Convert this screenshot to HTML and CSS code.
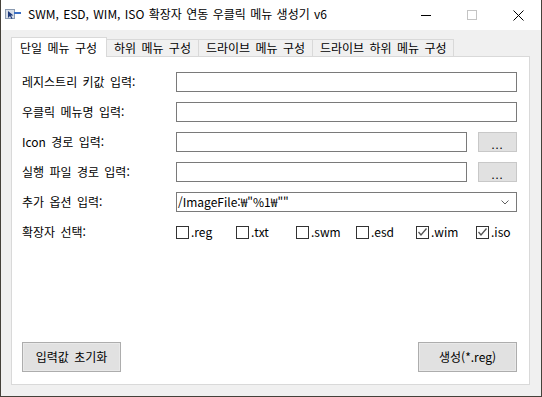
FILE: index.html
```html
<!DOCTYPE html>
<html lang="ko">
	<head>
		<meta charset="utf-8">
		<title>SWM, ESD, WIM, ISO 확장자 연동 우클릭 메뉴 생성기 v6</title>
		<link rel="stylesheet" href="styles.css">
	</head>
	<body>

		<div id="window">

			<div class="titleBar">
				<svg class="appIcon" width="16" height="12" viewBox="0 0 16 12">
					<rect x="0.5" y="1.5" width="9" height="9" fill="#d6dde8" stroke="#8a9ab0"/>
					<path d="M3 3 L3 10 L5 8 L6.5 11 L7.5 10.5 L6 7.5 L8.5 7.5 Z" fill="#1f3a7a"/>
					<rect x="9" y="4" width="7" height="2" fill="#3b6fc4"/>
				</svg>
				<div class="caption">SWM, ESD, WIM, ISO 확장자 연동 우클릭 메뉴 생성기 v6</div>
				<div class="capBt"><span class="minLine"></span></div>
				<div class="capBt"><span class="maxBox"></span></div>
				<div class="capBt">
					<svg width="11" height="11" viewBox="0 0 11 11">
						<path d="M0.5 0.5 L10.5 10.5 M10.5 0.5 L0.5 10.5" stroke="#000" stroke-width="1"/>
					</svg>
				</div>
			</div>

			<div class="client">

				<div class="tabs">
					<div class="tab selected">단일 메뉴 구성</div>
					<div class="tab">하위 메뉴 구성</div>
					<div class="tab">드라이브 메뉴 구성</div>
					<div class="tab">드라이브 하위 메뉴 구성</div>
				</div>

				<div class="panel">

					<div class="form">
						<div class="row">
							<div class="lbl">레지스트리 키값 입력:</div>
							<div class="edit"></div>
						</div>
						<div class="row">
							<div class="lbl">우클릭 메뉴명 입력:</div>
							<div class="edit"></div>
						</div>
						<div class="row">
							<div class="lbl">Icon 경로 입력:</div>
							<div class="browse">
								<div class="edit"></div>
								<div class="btDots">...</div>
							</div>
						</div>
						<div class="row">
							<div class="lbl">실행 파일 경로 입력:</div>
							<div class="browse">
								<div class="edit"></div>
								<div class="btDots">...</div>
							</div>
						</div>
						<div class="row">
							<div class="lbl">추가 옵션 입력:</div>
							<div class="combo">
								<span>/ImageFile:₩"%1₩""</span>
								<svg width="8" height="5" viewBox="0 0 8 5">
									<path d="M0.5 0.5 L4 4 L7.5 0.5" fill="none" stroke="#606060"/>
								</svg>
							</div>
						</div>
						<div class="row">
							<div class="lbl">확장자 선택:</div>
							<div class="checks">
								<div class="chk"><span class="box"></span>.reg</div>
								<div class="chk"><span class="box"></span>.txt</div>
								<div class="chk"><span class="box"></span>.swm</div>
								<div class="chk"><span class="box"></span>.esd</div>
								<div class="chk"><span class="box on"><svg width="11" height="11" viewBox="0 0 11 11"><path d="M1.5 5 L4 8 L9.5 1.5" fill="none" stroke="#555" stroke-width="1.3"/></svg></span>.wim</div>
								<div class="chk"><span class="box on"><svg width="11" height="11" viewBox="0 0 11 11"><path d="M1.5 5 L4 8 L9.5 1.5" fill="none" stroke="#555" stroke-width="1.3"/></svg></span>.iso</div>
							</div>
						</div>
					</div>

					<div class="bottom">
						<div class="bt">입력값 초기화</div>
						<div class="bt">생성(*.reg)</div>
					</div>

				</div>
			</div>
		</div>

	</body>
</html>
```

FILE: styles.css
```css
body{
	margin: 0;
	padding: 0;
	font-family: "Noto Sans CJK KR", "Noto Sans", sans-serif;
	font-size: 12px;
	word-spacing: 2px;
	color: #000;
	overflow: hidden;
	background-color: #3e3b31;
}

#window{
	width: 542px;
	height: 397px;
	box-sizing: border-box;
	border: 1px solid #45413a;
	border-top: none;
	display: flex;
	flex-direction: column;
	background-color: #f0f0f0;
}

.titleBar{
	height: 30px;
	display: flex;
	align-items: center;
	background-color: #fff;
}

.appIcon{
	margin-left: 4px;
	margin-top: -3px;
}

.caption{
	flex: 1;
	margin-left: 7px;
	margin-top: -3px;
	line-height: 16px;
	white-space: nowrap;
	word-spacing: 1px;
}

.capBt{
	width: 46px;
	height: 30px;
	display: flex;
	align-items: center;
	justify-content: center;
}

.minLine{
	width: 10px;
	height: 1px;
	background-color: #000;
}

.maxBox{
	width: 8px;
	height: 8px;
	border: 1px solid #c4c4c4;
}

.client{
	flex: 1;
	display: flex;
	flex-direction: column;
	padding: 7px 11px 11px 10px;
}

.tabs{
	height: 20px;
	display: flex;
	align-items: flex-end;
	margin-bottom: -1px;
	position: relative;
	z-index: 1;
}

.tab{
	height: 17px;
	box-sizing: border-box;
	margin-bottom: 1px;
	padding: 0 7px;
	line-height: 16px;
	white-space: nowrap;
	border-top: 1px solid #d9d9d9;
	border-right: 1px solid #d9d9d9;
	background-color: #f0f0f0;
}

.tab.selected{
	height: 20px;
	margin-bottom: 0;
	padding: 0 9px 0 8px;
	line-height: 19px;
	border-left: 1px solid #d9d9d9;
	background-color: #fff;
}

.panel{
	flex: 1;
	display: flex;
	flex-direction: column;
	padding: 15px 12px 12px 10px;
	border: 1px solid #d9d9d9;
	background-color: #fff;
}

.form{
	display: flex;
	flex-direction: column;
	gap: 10px;
}

.row{
	height: 20px;
	display: grid;
	grid-template-columns: 154px 1fr;
	align-items: center;
}

.lbl{
	line-height: 20px;
	white-space: nowrap;
}

.edit{
	height: 20px;
	box-sizing: border-box;
	border: 1px solid #7a7a7a;
	background-color: #fff;
}

.browse{
	display: grid;
	grid-template-columns: 1fr 39px;
	gap: 11px;
}

.btDots{
	height: 20px;
	box-sizing: border-box;
	border: 1px solid #c8c8c8;
	background-color: #e1e1e1;
	text-align: center;
	line-height: 22px;
	font-size: 11px;
	letter-spacing: 1px;
}

.combo{
	height: 20px;
	box-sizing: border-box;
	border: 1px solid #7a7a7a;
	display: flex;
	align-items: center;
	justify-content: space-between;
	padding: 0 7px 0 1px;
	line-height: 18px;
}

.checks{
	display: grid;
	grid-template-columns: repeat(6, 60px);
}

.chk{
	display: flex;
	align-items: center;
	gap: 2px;
	line-height: 20px;
}

.box{
	width: 13px;
	height: 13px;
	box-sizing: border-box;
	border: 1px solid #333;
	background-color: #fff;
	display: flex;
	align-items: center;
	justify-content: center;
}

.bottom{
	margin-top: auto;
	display: flex;
	justify-content: space-between;
}

.bt{
	width: 99px;
	height: 30px;
	box-sizing: border-box;
	border: 1px solid #adadad;
	box-shadow: inset 0 0 0 1px #e9e9e9;
	background-color: #e1e1e1;
	text-align: center;
	line-height: 28px;
}
```
